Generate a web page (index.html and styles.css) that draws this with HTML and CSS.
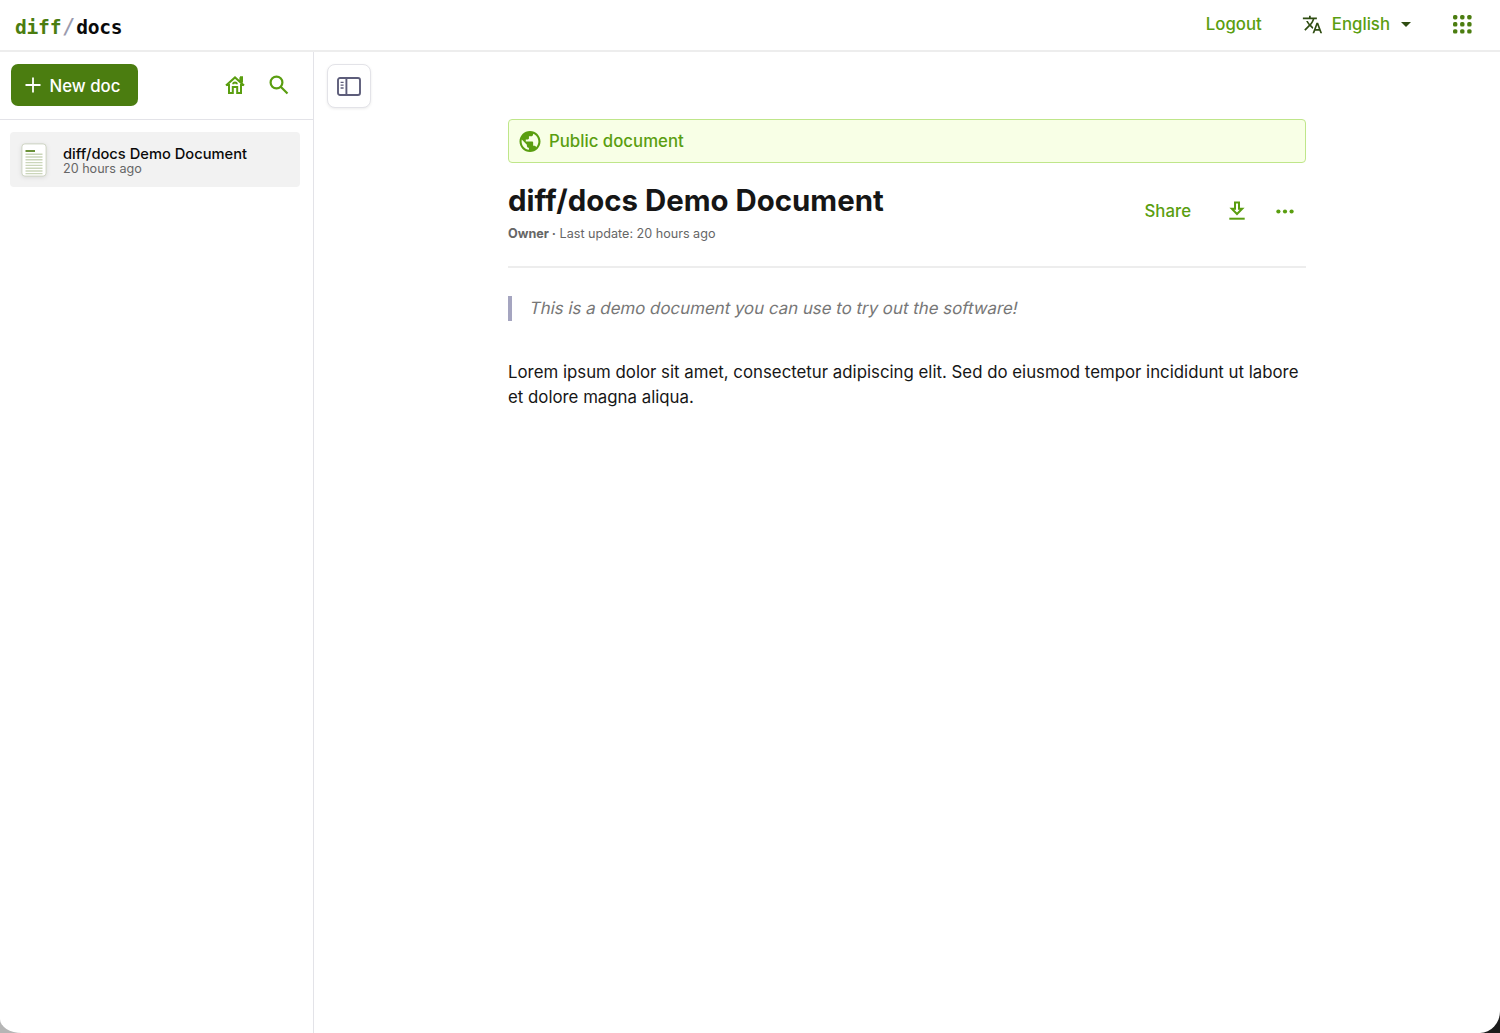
FILE: index.html
```html
<!DOCTYPE html>
<html lang="en">
<head>
<meta charset="UTF-8">
<meta name="viewport" content="width=device-width, initial-scale=1.0">
<title>diff/docs Demo Document</title>
<link rel="stylesheet" href="styles.css">
</head>
<body>
<div class="app">
    <header class="header">
        <a class="logo" href="#"><span class="logo-diff">diff</span><span class="logo-slash">/</span><span class="logo-docs">docs</span></a>
        <nav class="header-nav">
            <a class="logout" href="#">Logout</a>
            <div class="language">
                <svg class="icon-translate" viewBox="0 0 24 24"><path d="M12.87 15.07l-2.54-2.51.03-.03c1.74-1.94 2.98-4.17 3.71-6.53H17V4h-7V2H8v2H1v1.99h11.17C11.5 7.92 10.44 9.75 9 11.35 8.07 10.32 7.3 9.19 6.69 8h-2c.73 1.63 1.73 3.17 2.98 4.56l-5.09 5.02L4 19l5-5 3.11 3.11.76-2.04zM18.5 10h-2L12 22h2l1.12-3h4.75L21 22h2l-4.5-12zm-2.62 7l1.62-4.33L19.12 17h-3.24z"/></svg>
                <span>English</span>
                <svg class="icon-caret" viewBox="0 0 10 5"><path d="M0 0h10L5 5z"/></svg>
            </div>
            <svg class="icon-apps" viewBox="0 0 19 19">
                <rect x="0" y="0" width="4.4" height="4.4" rx="1.6"/><rect x="7.1" y="0" width="4.4" height="4.4" rx="1.6"/><rect x="14.2" y="0" width="4.4" height="4.4" rx="1.6"/>
                <rect x="0" y="7.1" width="4.4" height="4.4" rx="1.6"/><rect x="7.1" y="7.1" width="4.4" height="4.4" rx="1.6"/><rect x="14.2" y="7.1" width="4.4" height="4.4" rx="1.6"/>
                <rect x="0" y="14.2" width="4.4" height="4.4" rx="1.6"/><rect x="7.1" y="14.2" width="4.4" height="4.4" rx="1.6"/><rect x="14.2" y="14.2" width="4.4" height="4.4" rx="1.6"/>
            </svg>
        </nav>
    </header>

    <div class="layout">
        <aside class="sidebar">
            <div class="sidebar-top">
                <button class="new-doc">
                    <svg class="icon-plus" viewBox="0 0 16 16"><path d="M8 .5v15M.5 8h15"/></svg>
                    <span>New doc</span>
                </button>
                <svg class="icon-home" viewBox="0 0 20 20"><path d="M1 10.6L10 2.4l9 8.2M4 9v9.1h3.8v-6h4.4v6H16V9M15.4 7V2.2M17 7.5V2.2h-2M8.2 9.2a1.8 1.8 0 0 1 3.6 0"/></svg>
                <svg class="icon-search" viewBox="0 0 20 20"><circle cx="7.5" cy="7.5" r="5.9"/><path d="M12 12l6.5 6.5"/></svg>
            </div>
            <div class="doc-item">
                <svg class="doc-thumb" viewBox="0 0 26 34">
                    <rect class="sheet" x=".9" y=".9" width="24.2" height="32.2" rx="3"/>
                    <path class="sheet-title" d="M4.5 8h9.5"/>
                    <path class="sheet-lines" d="M4.5 11.2h17M4.5 14h17M4.5 16.8h17M4.5 19.6h17M4.5 22.4h17M4.5 25.2h17M4.5 28h17M4.5 30.6h17"/>
                </svg>
                <div class="doc-text">
                    <div class="doc-name">diff/docs Demo Document</div>
                    <div class="doc-date">20 hours ago</div>
                </div>
            </div>
        </aside>

        <main class="main">
            <button class="toggle">
                <svg class="icon-panel" viewBox="0 0 24 20"><rect x="1" y="1" width="22" height="17" rx="2"/><path d="M9.4 1v17"/><path class="thin" d="M3.6 5.4h3M3.6 8.2h3M3.6 11h3"/></svg>
            </button>
            <article class="doc">
                <div class="public">
                    <svg class="icon-globe" viewBox="2 2 20 20"><path d="M12 2C6.48 2 2 6.48 2 12s4.48 10 10 10 10-4.48 10-10S17.52 2 12 2zm-1 17.93c-3.95-.49-7-3.85-7-7.93 0-.62.08-1.21.21-1.79L9 15v1c0 1.1.9 2 2 2v1.93zm6.9-2.54c-.26-.81-1-1.39-1.9-1.39h-1v-3c0-.55-.45-1-1-1H8v-2h2c.55 0 1-.45 1-1V7h2c1.1 0 2-.9 2-2v-.41c2.93 1.19 5 4.06 5 7.41 0 2.08-.8 3.97-2.1 5.39z"/></svg>
                    <span>Public document</span>
                </div>
                <div class="doc-head">
                    <div>
                        <h1>diff/docs Demo Document</h1>
                        <p class="meta"><b>Owner ·</b> Last update: 20 hours ago</p>
                    </div>
                    <div class="actions">
                        <span class="share">Share</span>
                        <svg class="icon-download" viewBox="0 0 16 20"><path d="M6 1.5h4v6.2h3.2L8 13 2.8 7.7H6z"/><path d="M.3 17.7h15.4"/></svg>
                        <svg class="icon-more" viewBox="0 0 18 5"><circle cx="2.4" cy="2.5" r="2.1"/><circle cx="9" cy="2.5" r="2.1"/><circle cx="15.6" cy="2.5" r="2.1"/></svg>
                    </div>
                </div>
                <blockquote><span class="slanted">This is a demo document you can use to try out the software!</span></blockquote>
                <p class="text">Lorem ipsum dolor sit amet, consectetur adipiscing elit. Sed do eiusmod tempor incididunt ut labore et dolore magna aliqua.</p>
            </article>
        </main>
    </div>
</div>
</body>
</html>
```
FILE: styles.css
```css
* {
    box-sizing: border-box;
}

body {
    margin: 0;
    height: 1033px;
    overflow: hidden;
    background: linear-gradient(to right, #b5b5b5, #b5b5b5 50%, #1c1c1c 50%);
    font-family: Inter, "Liberation Sans", sans-serif;
    color: #161616;
}

svg {
    display: block;
    flex: none;
}

button {
    font-family: inherit;
    border: 0;
    padding: 0;
}

.app {
    display: flex;
    flex-direction: column;
    height: 1033px;
    background: #fff;
    border-radius: 0 0 20px 22px / 0 0 22px 14px;
    overflow: hidden;
}

/* header */
.header {
    display: flex;
    justify-content: space-between;
    height: 52px;
    padding: 0 28px 0 15px;
    border-bottom: 2px solid #ededed;
}

.logo {
    display: flex;
    align-items: center;
    padding-top: 4px;
    font-family: "DejaVu Sans Mono", monospace;
    font-size: 19.6px;
    font-weight: bold;
    letter-spacing: -0.25px;
    text-decoration: none;
}

.logo-diff {
    color: #4b7d10;
}

.logo-slash {
    width: 15px;
    text-align: center;
    font-size: 22px;
    font-weight: normal;
    line-height: 20px;
    color: #9a9aae;
}

.logo-docs {
    color: #0a0a0a;
}

.header-nav {
    display: flex;
    align-items: center;
    height: 48px;
    font-size: 16.8px;
    font-weight: 500;
    color: #5a9e10;
}

.logout {
    color: inherit;
    text-decoration: none;
    margin-right: 40px;
}

.language {
    display: flex;
    align-items: center;
    margin-right: 42px;
}

.icon-translate {
    width: 21px;
    height: 21px;
    margin-right: 9px;
    fill: #2f4d12;
}

.icon-caret {
    width: 10px;
    height: 5px;
    margin-left: 11px;
    fill: #2f4d12;
}

.icon-apps {
    width: 19px;
    height: 19px;
    fill: #4b7d10;
}

/* sidebar */
.layout {
    display: flex;
    flex: 1;
}

.sidebar {
    width: 314px;
    border-right: 1px solid #e3e3e8;
}

.sidebar-top {
    display: flex;
    align-items: center;
    height: 68px;
    padding: 0 24px 1px 10.5px;
    border-bottom: 1px solid #e3e3e8;
}

.new-doc {
    display: flex;
    align-items: center;
    width: 127.5px;
    height: 42px;
    padding-left: 14px;
    margin-right: auto;
    border-radius: 7px;
    background: #4b7d10;
    color: #fff;
    font-size: 16.8px;
    font-weight: 500;
}

.new-doc span {
    padding-top: 1px;
}

.icon-plus {
    width: 16px;
    height: 16px;
    margin-right: 9px;
    fill: none;
    stroke: #fff;
    stroke-width: 1.8;
}

.icon-home,
.icon-search {
    width: 20px;
    height: 20px;
    fill: none;
    stroke: #5a9e10;
    stroke-width: 2;
}

.icon-search {
    stroke-width: 2.2;
}

.icon-home {
    margin-right: 24px;
}

.doc-item {
    display: flex;
    align-items: center;
    width: 290px;
    height: 55px;
    margin: 12px 0 0 10px;
    padding-left: 11px;
    border-radius: 4px;
    background: #f2f2f2;
}

.doc-thumb {
    width: 26px;
    height: 34px;
    margin-right: 16px;
    filter: drop-shadow(0 1px 2px rgba(0, 0, 0, 0.1));
}

.sheet {
    fill: #fff;
    stroke: #cdd3c2;
    stroke-width: 1;
}

.sheet-title {
    stroke: #6b9139;
    stroke-width: 2;
}

.sheet-lines {
    stroke: #cbd6ba;
    stroke-width: 1.4;
}

.doc-text {
    padding-top: 2px;
}

.doc-name {
    font-size: 14.7px;
    font-weight: 500;
    line-height: 16px;
    white-space: nowrap;
    color: #0a0a0a;
}

.doc-date {
    font-size: 12.6px;
    line-height: 13px;
    color: #666;
}

/* document */
.main {
    display: flex;
    flex: 1;
    align-items: flex-start;
    padding: 13px 0 0 13px;
}

.toggle {
    display: flex;
    align-items: center;
    justify-content: center;
    width: 44px;
    height: 44px;
    margin-top: -1px;
    background: #fff;
    border: 1px solid #e3e3e8;
    border-radius: 8px;
    box-shadow: 0 1px 3px rgba(0, 0, 0, 0.08);
}

.icon-panel {
    width: 24px;
    height: 20px;
    margin-top: 1px;
    fill: none;
    stroke: #5d5d7a;
    stroke-width: 1.9;
}

.icon-panel .thin {
    stroke-width: 1.3;
}

.doc {
    width: 798px;
    margin: 54px 0 0 137px;
}

.public {
    display: flex;
    align-items: center;
    height: 44px;
    padding-left: 10px;
    border: 1px solid #bfe68a;
    border-radius: 4px;
    background: #f8ffe6;
    color: #5a9e10;
    font-size: 16.8px;
    font-weight: 500;
}

.icon-globe {
    width: 22px;
    height: 21px;
    margin-right: 8px;
    fill: #5a9e10;
}

.doc-head {
    display: flex;
    justify-content: space-between;
    height: 105px;
    padding-top: 18px;
    border-bottom: 2px solid #ededed;
}

h1 {
    margin: 0;
    font-size: 29.4px;
    font-weight: 700;
    line-height: 40px;
}

.meta {
    margin: 4px 0 0;
    font-size: 12.6px;
    line-height: 18px;
    color: #666;
}

.actions {
    display: flex;
    align-items: center;
    height: 60px;
    padding-right: 12px;
}

.share {
    margin-right: 38px;
    font-size: 16.8px;
    font-weight: 500;
    color: #5a9e10;
}

.icon-download {
    width: 16px;
    height: 20px;
    margin-right: 31px;
    fill: none;
    stroke: #5a9e10;
    stroke-width: 2;
}

.icon-more {
    width: 18px;
    height: 5px;
    fill: #5a9e10;
}

blockquote {
    margin: 28px 0 0;
    padding-left: 18px;
    border-left: 4px solid #a5a5c0;
    font-size: 16.86px;
    line-height: 25px;
    color: #777;
}

.slanted {
    display: block;
    transform: translateY(0.4px) skewX(-12deg);
}

.text {
    margin: 39px 0 0;
    font-size: 16.82px;
    line-height: 25.2px;
}
```
